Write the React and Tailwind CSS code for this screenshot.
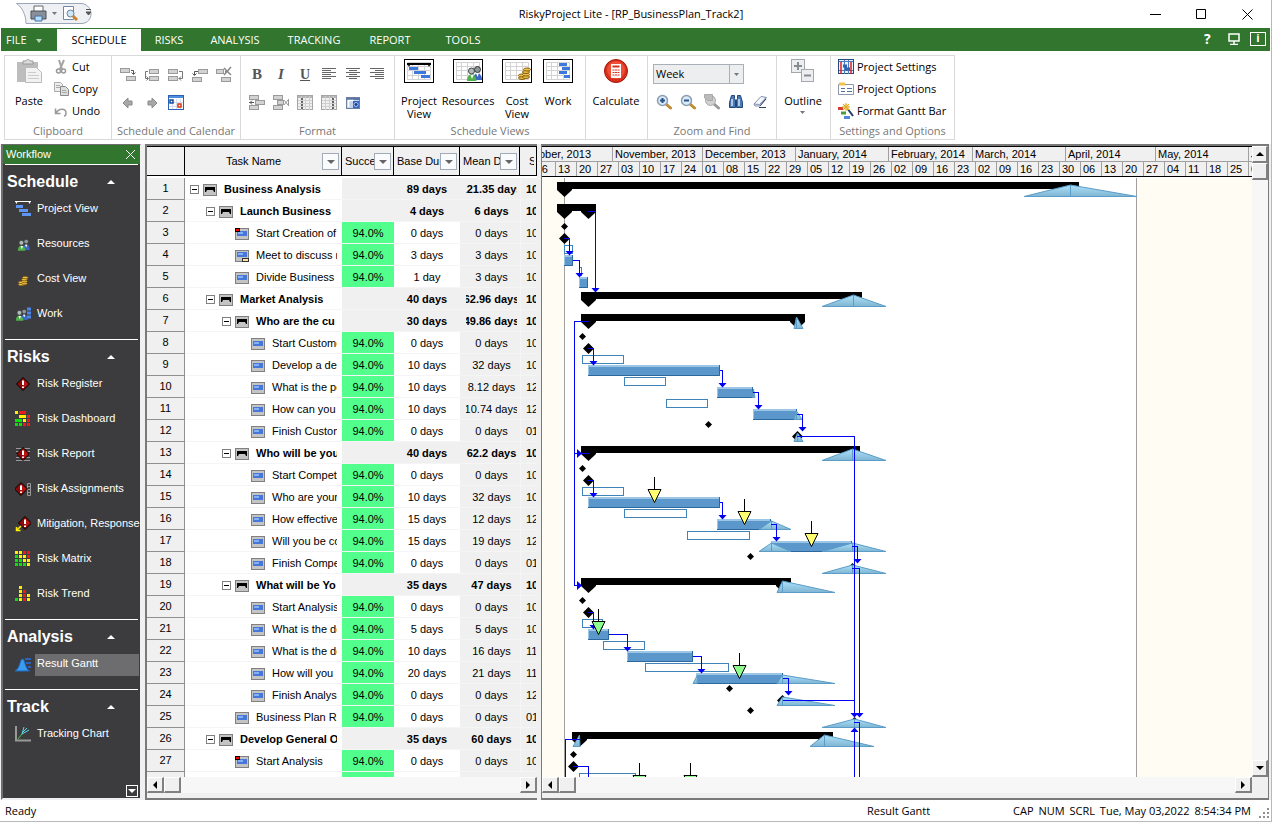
import { useState } from 'react';

const TABS = [
  { name: 'SCHEDULE', cls: 'w-[84px]' },
  { name: 'RISKS', cls: 'w-[56px]' },
  { name: 'ANALYSIS', cls: 'w-[76px]' },
  { name: 'TRACKING', cls: 'w-[82px]' },
  { name: 'REPORT', cls: 'w-[70px]' },
  { name: 'TOOLS', cls: 'w-[76px]' },
];

// level, name, base duration, mean duration, start, kind
const TASKS = [
  [0, 'Business Analysis', '89 days', '121.35 days', '10', 'sum'],
  [1, 'Launch Business', '4 days', '6 days', '10', 'sum'],
  [2, 'Start Creation of', '0 days', '0 days', '10', 'flag'],
  [2, 'Meet to discuss n', '3 days', '3 days', '10', 'note'],
  [2, 'Divide Business I', '1 day', '3 days', '10', 'task'],
  [1, 'Market Analysis', '40 days', '62.96 days', '10', 'sum'],
  [2, 'Who are the cu', '30 days', '49.86 days', '10', 'sum'],
  [3, 'Start Customer', '0 days', '0 days', '10', 'task'],
  [3, 'Develop a desc', '10 days', '32 days', '10', 'task'],
  [3, 'What is the pot', '10 days', '8.12 days', '12', 'task'],
  [3, 'How can you', '10 days', '10.74 days', '12', 'task'],
  [3, 'Finish Custome', '0 days', '0 days', '01', 'task'],
  [2, 'Who will be your', '40 days', '62.2 days', '10', 'sum'],
  [3, 'Start Competiti', '0 days', '0 days', '10', 'task'],
  [3, 'Who are your', '10 days', '32 days', '10', 'task'],
  [3, 'How effective', '15 days', '12 days', '12', 'task'],
  [3, 'Will you be co', '15 days', '19 days', '12', 'task'],
  [3, 'Finish Compet', '0 days', '0 days', '01', 'task'],
  [2, 'What will be Yo', '35 days', '47 days', '10', 'sum'],
  [3, 'Start Analysis', '0 days', '0 days', '10', 'task'],
  [3, 'What is the de', '5 days', '5 days', '10', 'task'],
  [3, 'What is the de', '10 days', '16 days', '11', 'task'],
  [3, 'How will you', '20 days', '21 days', '11', 'task'],
  [3, 'Finish Analysis', '0 days', '0 days', '12', 'task'],
  [2, 'Business Plan Re', '0 days', '0 days', '01', 'task'],
  [1, 'Develop General O', '35 days', '60 days', '10', 'sum'],
  [2, 'Start Analysis', '0 days', '0 days', '10', 'flag'],
];

const INDENT = ['pl-[5px]', 'pl-[21px]', 'pl-[37px]', 'pl-[53px]'];

const MONTHS = [
  ['November, 2013', 'w-[90px]'],
  ['December, 2013', 'w-[93px]'],
  ['January, 2014', 'w-[93px]'],
  ['February, 2014', 'w-[84px]'],
  ['March, 2014', 'w-[93px]'],
  ['April, 2014', 'w-[90px]'],
  ['May, 2014', 'w-[93px]'],
];

const WEEKS =
  '13 20 27 03 10 17 24 01 08 15 22 29 05 12 19 26 02 09 16 23 02 09 16 23 30 06 13 20 27 04 11 18 25'.split(' ');

/* ---------- chart data: first item is always the row number ---------- */

// row, start, end, tip at start, tip at end
const SUMMARIES = [
  [1, 15, 537, 1, 0],
  [2, 15, 54, 1, 1],
  [6, 39, 320, 1, 0],
  [7, 39, 263, 1, 1],
  [13, 39, 318, 1, 0],
  [19, 39, 249, 1, 1],
  [26, 30, 291, 1, 1],
];

const SUMMARY_TRIS = [
  [1, 482, 528, 595],
  [6, 280, 311, 344],
  [7, 252, 254, 261],
  [13, 280, 310, 344],
  [19, 235, 240, 293],
  [26, 31, 37, 38],
  [26, 268, 282, 332],
];

const BASELINES = [
  [4, 22, 30],
  [5, 37, 39],
  [9, 40, 81],
  [10, 82, 123],
  [11, 124, 165],
  [15, 40, 81],
  [16, 82, 144],
  [17, 145, 207],
  [21, 40, 60],
  [22, 61, 102],
  [23, 103, 186],
  [28, 37, 93],
];

const BARS = [
  [4, 22, 31],
  [5, 37, 46],
  [9, 46, 178],
  [10, 175, 211],
  [11, 211, 255],
  [15, 46, 178],
  [16, 175, 229],
  [17, 229, 310],
  [21, 46, 67],
  [22, 85, 151],
  [23, 154, 241],
];

const TASK_TRIS = [
  [10, 210, 211, 213],
  [11, 252, 254, 260],
  [12, 252, 255, 261],
  [16, 217, 229, 249],
  [17, 217, 229, 249],
  [17, 280, 310, 344],
  [18, 280, 310, 344],
  [23, 151, 155, 155],
  [23, 235, 240, 293],
  [24, 235, 240, 293],
  [25, 280, 312, 344],
];

const SMALL_DIAMONDS = [
  [3, 22], [8, 40], [12, 166], [14, 40], [18, 208], [20, 40], [24, 187], [25, 208], [27, 31],
];

const BIG_DIAMONDS = [
  [3, 22], [8, 46], [12, 255], [14, 46], [18, 310], [20, 46], [24, 240], [25, 312], [27, 31],
];

// row, x, colour
const RISKS = [
  [15, 112, '#ffff70'],
  [16, 202, '#ffff70'],
  [17, 269, '#ffff70'],
  [21, 56, '#8cff8c'],
  [23, 197, '#8cff8c'],
  [28, 97, '#8cff8c'],
  [28, 148, '#8cff8c'],
];

const LINKS = [
  'M46 33.5H53.5V112',
  'M22 60.5H27.5V75',
  'M31 82.5H37.5V97',
  'M47 143.5H32.5V407.5H38',
  'M32.5 275.5H47',
  'M46 170.5H51.5V185',
  'M178 192.5H180.5V207',
  'M211 214.5H216.5V229',
  'M255 236.5H260.5V251',
  'M255 258.5H312.5V537',
  'M46 302.5H51.5V317',
  'M178 324.5H180.5V339',
  'M229 346.5H234.5V361',
  'M310 368.5H315.5V383',
  'M310 390.5H317.5V537',
  'M46 434.5H51.5V449',
  'M67 456.5H85.5V471',
  'M151 478.5H159.5V493',
  'M241 500.5H246.5V515',
  'M241 522.5H312.5',
  'M312 544.5H317.5V1200',
  'M312.5 552V1200',
  'M38 561.5H23.5V1200',
  'M31 588.5H46.5V1200',
];

const DOWN_ARROWS = [
  [53, 114], [27, 77], [37, 99], [51, 187], [180, 209], [216, 231], [260, 253], [312, 539],
  [51, 319], [180, 341], [234, 363], [315, 385], [317, 539], [51, 451], [85, 473], [159, 495],
  [246, 517],
];

const top = (row) => (row - 1) * 22;

function Tri({ x1, x2, x3, y, h }) {
  return (
    <g stroke="#5b9cc8">
      <path d={`M${x1} ${y + h}L${x2 + 0.5} ${y}L${x3} ${y + h}Z`} fill="url(#tri)" />
      <path d={`M${x2 + 0.5} ${y}V${y + h}`} />
    </g>
  );
}

function GanttChart() {
  return (
    <svg className="absolute inset-0 h-full w-full" role="img" aria-label="Result Gantt chart">
      <defs>
        <linearGradient id="tri" x1="0" y1="0" x2="0" y2="1">
          <stop offset="0" stopColor="#aee2fb" />
          <stop offset="1" stopColor="#7fb5d2" />
        </linearGradient>
      </defs>
      <rect width="100%" height="100%" fill="#fffcf4" />
      <rect x="22" width="572" height="100%" fill="#fff" />
      <path d="M22.5 0V1200M594.5 0V1200" stroke="#a0a0a0" />

      {SUMMARIES.map(([row, s, e, a, b]) => (
        <g key={row} fill="#000">
          <rect x={s} y={top(row) + 4} width={e - s} height="7" />
          {a ? <path d={`M${s} ${top(row) + 11}h15v1l-7.500 7l-7.500 -7z`} /> : null}
          {b ? <path d={`M${e} ${top(row) + 11}h-15v1l7.500 7l7.500 -7z`} /> : null}
        </g>
      ))}
      {SUMMARY_TRIS.map(([row, x1, x2, x3]) => (
        <Tri key={`${row}-${x1}`} x1={x1} x2={x2} x3={x3} y={top(row) + 7} h={11.5} />
      ))}
      {SMALL_DIAMONDS.map(([row, x]) => (
        <path key={row} d={`M${x + 0.5} ${top(row) + 1}l3.500 3.500l-3.500 3.500l-3.500 -3.500z`} />
      ))}
      {BIG_DIAMONDS.map(([row, x]) => (
        <path key={row} d={`M${x + 0.5} ${top(row) + 11}l5.500 5.500l-5.500 5.500l-5.500 -5.500z`} />
      ))}
      {BASELINES.map(([row, s, e]) => (
        <rect key={row} x={s + 0.5} y={top(row) + 1.5} width={e - s} height="8" fill="#fff" stroke="#3f83b8" />
      ))}
      {BARS.map(([row, s, e]) => (
        <g key={row}>
          <rect x={s} y={top(row) + 11} width={e - s} height="11" fill="#5b97cb" />
          <path d={`M${s} ${top(row) + 12}H${e}`} stroke="#9cc6e6" strokeWidth="2" />
          <path d={`M${s + 0.5} ${top(row) + 11}v11`} stroke="#9cc6e6" />
          <path d={`M${s} ${top(row) + 21.5}H${e - 0.5}V${top(row) + 11}`} stroke="#2b689f" fill="none" />
        </g>
      ))}
      {TASK_TRIS.map(([row, x1, x2, x3]) => (
        <Tri key={`${row}-${x1}`} x1={x1} x2={x2} x3={x3} y={top(row) + 13} h={8.5} />
      ))}

      <g fill="none" stroke="#0000f5" shapeRendering="crispEdges">
        {LINKS.map((d) => (
          <path key={d} d={d} />
        ))}
      </g>
      <g fill="#0000f5">
        {DOWN_ARROWS.map(([x, y]) => (
          <path key={`${x}-${y}`} d={`M${x - 3.5} ${y - 4}h8l-4 4.500z`} />
        ))}
        <path d="M35 271v9l5 -4.500zM35 403v9l5 -4.500zM308.500 554h8l-4 -4.500z" />
      </g>

      {RISKS.map(([row, x, fill]) => (
        <g key={`${row}-${x}`} stroke="#000">
          <path d={`M${x + 0.5} ${top(row) - 9}v12`} />
          <path d={`M${x - 6} ${top(row) + 3.5}h13l-6.500 13z`} fill={fill} />
        </g>
      ))}
    </svg>
  );
}

/* ---------- icons ---------- */

function Svg({ w = 16, h = 16, children }) {
  return (
    <svg width={w} height={h} viewBox={`0 0 ${w} ${h}`} fill="none" className="shrink-0" aria-hidden="true">
      {children}
    </svg>
  );
}

const Block = ({ x, y, w = 9 }) => (
  <rect x={x + 0.5} y={y + 0.5} width={w} height="4" fill="#d2d2d2" stroke="#9a9a9a" />
);

const ScheduleIcons = {
  'Insert task below': (
    <Svg><Block x={0} y={2} /><Block x={6} y={10} /><path d="M11 4.500h2.500V8M11.500 6.500l2 2l2 -2" stroke="#555" /></Svg>
  ),
  Indent: (
    <Svg><Block x={5} y={3} /><Block x={5} y={10} /><path d="M4 5.500H1.500V12.500H4M2.500 10.500l2 2l-2 2" stroke="#777" /></Svg>
  ),
  'Link tasks': (
    <Svg><Block x={0} y={3} /><Block x={0} y={10} /><path d="M11 5.500h3.500V12.500H11M13 10.500l-2 2l2 2" stroke="#777" /></Svg>
  ),
  Outdent: (
    <Svg><Block x={6} y={3} /><Block x={0} y={11} /><path d="M6 5.500H2.500V9M0.500 7.500l2 2l2 -2" stroke="#555" /></Svg>
  ),
  'Delete task': (
    <Svg><Block x={0} y={3} w={7} /><Block x={5} y={11} /><path d="M9 5.500h3M8 2l7 7M15 1L8 9" stroke="#888" strokeWidth="1.500" /></Svg>
  ),
};

const ArrowIcon = ({ flip }) => (
  <Svg>
    <path
      d={flip ? 'M13 8L8 3V6H4V10H8V13z' : 'M3 8L8 3V6H12V10H8V13z'}
      fill="#a8a8a8"
      stroke="#8a8a8a"
    />
  </Svg>
);

const CalendarIcon = () => (
  <Svg>
    <rect x="0.500" y="0.500" width="15" height="14" fill="#fff" stroke="#2a62b4" />
    <path d="M1 1h14v2H1z" fill="#4f8ede" />
    <path d="M4.500 4v10M8.500 4v10M12.500 4v10M1 7.500h14M1 11.500h14" stroke="#d5deee" />
    <rect x="2" y="5" width="3" height="3" fill="#fff" stroke="#174a9c" strokeWidth="1.500" />
    <rect x="10" y="9" width="3" height="3" fill="#fff" stroke="#d83a12" strokeWidth="1.500" />
  </Svg>
);

const AlignIcon = ({ d }) => (
  <Svg><path d={d} stroke="#666" /></Svg>
);

const ColumnIcon = ({ x }) => (
  <Svg>
    <rect x="0.500" y="0.500" width="15" height="14" fill="#f0f0f0" stroke="#a5a5a5" />
    <path d="M1 2h14" stroke="#b5b5b5" strokeWidth="2" />
    <path d="M1 5.500h14M1 8.500h14M1 11.500h14M4.500 1v14M8.500 1v14M12.500 1v14" stroke="#cfcfcf" />
    <path d={`M${x} 3v12`} stroke="#666" strokeWidth="2" strokeDasharray="2 1" />
  </Svg>
);

const ViewFrame = ({ children, grid = true }) => (
  <Svg w={30} h={24}>
    <rect x="0.500" y="0.500" width="29" height="23" fill="#fff" stroke="#000" />
    {grid && <path d="M3.500 3.500h23v17h-23zM3 7.500h24M3 11.500h24M3 16.500h24M8.500 3v17M14.500 3v17M20.500 3v17" stroke="#d3d3d3" />}
    {children}
  </Svg>
);

const People = () => (
  <>
    <path d="M7 15c0-9 9-9 9 0z" fill="#3b66c4" />
    <path d="M10 8l1.500 4L13 8z" fill="#fff" />
    <circle cx="11.500" cy="4.500" r="3" fill="#8b9696" stroke="#333" />
    <path d="M1 16c0-9 9-9 9.500 0z" fill="#4fb04a" />
    <path d="M4.500 10l1.500 4l1.500-4z" fill="#fff" />
    <circle cx="5.500" cy="6" r="3" fill="#b0baba" stroke="#444" />
  </>
);

const Coins = () => (
  <g fill="#f0c24a" stroke="#86600e">
    <ellipse cx="4" cy="13" rx="3.500" ry="1.500" />
    <ellipse cx="4" cy="10.500" rx="3.500" ry="1.500" />
    <ellipse cx="8" cy="12" rx="3.500" ry="1.500" />
    <ellipse cx="8" cy="9.500" rx="3.500" ry="1.500" />
    <ellipse cx="8" cy="7" rx="3.500" ry="1.500" />
    <ellipse cx="9" cy="4.500" rx="3.500" ry="1.500" />
  </g>
);

const Lens = ({ sign, gray }) => (
  <Svg>
    <path d="M10 10l4.500 4" stroke={gray ? '#999' : '#c08a30'} strokeWidth="3" strokeLinecap="round" />
    {gray ? (
      <>
        <circle cx="6.500" cy="6.500" r="5" fill="#d0d0d0" stroke="#aaa" />
        <path d="M0.500 0.500h8v6H4L0.500 4z" fill="#bbb" stroke="#aaa" />
      </>
    ) : (
      <circle cx="6.500" cy="6.500" r="5" fill="#dbeaf7" stroke="#8d9db1" strokeWidth="1.500" />
    )}
    {sign && <path d={sign} stroke="#27548f" strokeWidth="2" />}
  </Svg>
);

const RiskGem = () => (
  <>
    <path d="M8 1.500l6.500 6.500L8 14.500L1.500 8z" fill="#8e0808" stroke="#000" />
    <path d="M8 3l5 5l-5 5z" fill="#b81414" />
    <path d="M8 4.500v4.500M8 10.500v1.500" stroke="#fff" strokeWidth="2" />
  </>
);

const Squares = ({ cells }) => (
  <Svg>
    {cells.map(([c, r, fill, w = 1]) => (
      <rect key={`${c}${r}`} x={c * 4} y={r * 4} width={w * 4 - 1} height="3" fill={fill} />
    ))}
  </Svg>
);

const G = '#0be00b';
const Y = '#ffee00';
const R = '#f01818';

const TaskBars = () => (
  <Svg>
    <path d="M0 0.500h16" stroke="#fff" />
    <path d="M0 0h3L1.500 3zM13 0h3l-1.500 3z" fill="#fff" />
    <rect x="1" y="4" width="7" height="3" fill="#5e94f2" />
    <rect x="4" y="8" width="9" height="3" fill="#5e94f2" />
    <rect x="7" y="12" width="9" height="3" fill="#5e94f2" />
  </Svg>
);

const SECTIONS = [
  {
    title: 'Schedule',
    items: [
      ['Project View', <TaskBars />],
      ['Resources', <Svg><g transform="translate(2 2) scale(.8)"><People /></g></Svg>],
      ['Cost View', <Svg><g transform="translate(3 3) scale(.8)"><Coins /></g></Svg>],
      ['Work', (
        <Svg>
          <g transform="translate(0 2) scale(.8)"><People /></g>
          <path d="M12 3h4M12 7h4M12 11h4" stroke="#4a86ee" strokeWidth="3" />
        </Svg>
      )],
    ],
  },
  {
    title: 'Risks',
    items: [
      ['Risk Register', <Svg><RiskGem /></Svg>],
      ['Risk Dashboard', (
        <Squares cells={[[0, 0, Y], [1, 0, R, 2], [1, 1, Y, 2], [3, 1, R], [0, 2, G, 2], [2, 2, Y], [3, 2, R], [0, 3, G], [1, 3, G], [2, 3, R], [3, 3, R]]} />
      )],
      ['Risk Report', <Svg><path d="M1 2.500h14M1 5.500h14M1 8.500h14M1 11.500h14M1 14.500h14" stroke="#999" /><RiskGem /></Svg>],
      ['Risk Assignments', <Svg><path d="M12.500 2.500h3v12h-3zM12 5.500h4M12 8.500h4M12 11.500h4" stroke="#999" /><g transform="translate(-2 0)"><RiskGem /></g></Svg>],
      ['Mitigation, Response', <Svg><g transform="translate(2 -1)"><RiskGem /></g><path d="M6 10L1.500 14.500M1.500 11v3.500h4" stroke="#ffee00" strokeWidth="1.500" /></Svg>],
      ['Risk Matrix', (
        <Squares cells={[[0, 0, Y], [1, 0, Y], [2, 0, R], [3, 0, R], [0, 1, G], [1, 1, Y], [2, 1, Y], [3, 1, R], [0, 2, G], [1, 2, G], [2, 2, Y], [3, 2, Y], [0, 3, G], [1, 3, G], [2, 3, G], [3, 3, Y]]} />
      )],
      ['Risk Trend', (
        <Squares cells={[[1, 0, Y], [1, 1, Y], [2, 1, R], [1, 2, Y], [2, 2, R], [3, 2, Y], [0, 3, G], [1, 3, Y], [2, 3, R], [3, 3, Y]]} />
      )],
    ],
  },
  {
    title: 'Analysis',
    items: [
      ['Result Gantt', (
        <Svg>
          <path d="M0 15C5 13 5 3 7.500 3s2.500 10 7 12z" fill="#3b9bf0" stroke="#1d6bc0" />
          <path d="M10 3h6M11 7h5M13 11h3" stroke="#2f62b8" strokeWidth="2" />
        </Svg>
      )],
    ],
  },
  {
    title: 'Track',
    items: [
      ['Tracking Chart', <Svg><path d="M1 0v14.500h15" stroke="#999" strokeWidth="2" /><path d="M3 13l4-5" stroke="#3fd03f" /><path d="M7 8l2-7M7 8l7-4M8 6l4-4" stroke="#5fd8e8" /></Svg>],
    ],
  },
];

const TaskMark = ({ y = 3 }) => (
  <>
    <rect x="2" y={y} width="10" height="5" fill="#4678dc" />
    <rect x="3" y={y + 1} width="5" height="2" fill="#86b0f4" />
  </>
);

const ROW_ICON = {
  sum: <path d="M2 3h10v5h-1l-1-2H4L3 8H2z" fill="#000" />,
  task: <TaskMark />,
  flag: (
    <>
      <TaskMark />
      <rect x="0.500" y="0.500" width="4" height="3" fill="#f00" stroke="#000" />
    </>
  ),
  note: (
    <>
      <TaskMark y={2} />
      <rect x="7.500" y="8.500" width="6" height="3" fill="#ffe2a8" stroke="#333" />
    </>
  ),
};

/* ---------- ribbon ---------- */

function Group({ label, className, children }) {
  return (
    <section className={`flex shrink-0 flex-col border-r border-[#d9d9d9] ${className}`} aria-label={label}>
      <div className="min-h-0 flex-1">{children}</div>
      <div className="h-[17px] text-center leading-[17px] text-[#777]">{label}</div>
    </section>
  );
}

function IconButton({ label, children }) {
  return (
    <button type="button" aria-label={label} className="flex h-[22px] w-6 items-center justify-center">
      {children}
    </button>
  );
}

function BigButton({ lines, className = '', children }) {
  return (
    <button type="button" className={`flex flex-col items-center pt-[3px] ${className}`}>
      <span className="mb-[11px] flex h-6 items-center">{children}</span>
      {lines.map((t) => (
        <span key={t} className="h-[13px] leading-[13px]">{t}</span>
      ))}
    </button>
  );
}

function LineButton({ icon, text }) {
  return (
    <button type="button" className="flex h-[22px] items-center gap-[3px]">
      <span className="flex w-4 justify-center">{icon}</span>
      {text}
    </button>
  );
}

function Ribbon() {
  const [zoom, setZoom] = useState('Week');

  return (
    <div className="flex h-[93px] shrink-0 items-start overflow-hidden bg-white pt-1 pl-1 text-[11px]">
      <div className="flex h-[85px] border border-r-0 border-[#d9d9d9]">
        <Group label="Clipboard" className="w-[107px]">
          <div className="flex">
            <BigButton lines={['Paste']} className="w-[48px]">
              <Svg w={26} h={24}>
                <path d="M1 3h21v20H1z" fill="#bdbdbd" />
                <path d="M7 5V2h3c0-2 4-2 4 0h3v3z" fill="#ddd" stroke="#999" />
                <path d="M9.500 8.500h11l5 5v10h-16z" fill="#f2f2f2" stroke="#bbb" />
                <path d="M12 13.500h8M12 16.500h11M12 19.500h11" stroke="#ccc" />
              </Svg>
            </BigButton>
            <div>
              <LineButton text="Cut" icon={<Svg><path d="M6 1l3 9M11 1l-4 9" stroke="#a5a5a5" strokeWidth="2" /><circle cx="5.500" cy="12" r="2" stroke="#999" strokeWidth="1.500" /><circle cx="10.500" cy="12" r="2" stroke="#999" strokeWidth="1.500" /></Svg>} />
              <LineButton text="Copy" icon={<Svg><path d="M1.500 1.500h6l2 2v7h-8z" fill="#eee" stroke="#aaa" /><path d="M7.500 5.500h5l3 3v6h-8z" fill="#ddd" stroke="#888" /><path d="M9 9.500h4M9 11.500h5M3 4.500h4M3 6.500h4" stroke="#aaa" /></Svg>} />
              <LineButton text="Undo" icon={<Svg><path d="M2.500 5.500v5h5M3 10c3-5 10-5 10 0c0 2-1 3-2 3" stroke="#999" strokeWidth="1.500" /></Svg>} />
            </div>
          </div>
        </Group>

        <Group label="Schedule and Calendar" className="w-[129px]">
          <div className="flex flex-col gap-[7px] pt-[7px] pl-1">
            <div className="flex">
              {Object.entries(ScheduleIcons).map(([label, icon]) => (
                <IconButton key={label} label={label}>{icon}</IconButton>
              ))}
            </div>
            <div className="flex">
              <IconButton label="Back"><ArrowIcon /></IconButton>
              <IconButton label="Forward"><ArrowIcon flip /></IconButton>
              <IconButton label="Calendar"><CalendarIcon /></IconButton>
            </div>
          </div>
        </Group>

        <Group label="Format" className="w-[154px]">
          <div className="flex flex-col gap-[7px] pt-[7px] pl-1 text-[#555]">
            <div className="flex">
              <IconButton label="Bold"><b className="font-['Liberation_Serif',serif] text-[15px]">B</b></IconButton>
              <IconButton label="Italic"><b className="font-['Liberation_Serif',serif] text-[15px] italic">I</b></IconButton>
              <IconButton label="Underline"><b className="font-['Liberation_Serif',serif] text-[14px] underline">U</b></IconButton>
              <IconButton label="Align left"><AlignIcon d="M1 2.500h14M1 4.500h9M1 6.500h14M1 8.500h9M1 10.500h14M1 12.500h9" /></IconButton>
              <IconButton label="Align center"><AlignIcon d="M1 2.500h14M4 4.500h8M1 6.500h14M4 8.500h8M1 10.500h14M4 12.500h8" /></IconButton>
              <IconButton label="Align right"><AlignIcon d="M1 2.500h14M6 4.500h9M1 6.500h14M6 8.500h9M1 10.500h14M6 12.500h9" /></IconButton>
            </div>
            <div className="flex">
              <IconButton label="Insert row"><Svg><Block x={0} y={0} /><Block x={6} y={5} /><Block x={0} y={10} /><path d="M0 7.500h5M3 5.500l-2 2l2 2" stroke="#555" /></Svg></IconButton>
              <IconButton label="Delete row"><Svg><Block x={0} y={0} /><Block x={4} y={5} w={6} /><Block x={0} y={10} /><path d="M11 5l4 5M15 5l-4 5M15.500 4v7" stroke="#999" /></Svg></IconButton>
              <IconButton label="Insert column"><ColumnIcon x={5} /></IconButton>
              <IconButton label="Delete column"><ColumnIcon x={12} /></IconButton>
              <IconButton label="Snapshot">
                <Svg>
                  <rect x="1.500" y="2.500" width="13" height="11" fill="#c3d4ee" stroke="#6d7f9f" />
                  <path d="M2 3h13v2H2z" fill="#5a76a8" />
                  <path d="M3.500 12V5.500h5" stroke="#fff" strokeWidth="1.500" />
                  <rect x="8" y="6" width="6" height="7" fill="#3364c0" />
                  <circle cx="11" cy="9.500" r="2" fill="#1c3f8c" stroke="#a9c2ea" />
                </Svg>
              </IconButton>
            </div>
          </div>
        </Group>

        <Group label="Schedule Views" className="w-[191px]">
          <div className="flex">
            <BigButton lines={['Project', 'View']} className="w-[48px]">
              <ViewFrame>
                <path d="M3 5h24" stroke="#000" strokeWidth="2" />
                <path d="M3 4h4L5 8zM23 4h4l-2 4z" fill="#000" />
                <path d="M5 9.500h9M10 13.500h12M17 17.500h9" stroke="#3d78de" strokeWidth="3" />
              </ViewFrame>
            </BigButton>
            <BigButton lines={['Resources']} className="w-[50px]">
              <ViewFrame><g transform="translate(13 6)"><People /></g></ViewFrame>
            </BigButton>
            <BigButton lines={['Cost', 'View']} className="w-[48px]">
              <ViewFrame><g transform="translate(16 6)"><Coins /></g></ViewFrame>
            </BigButton>
            <BigButton lines={['Work']} className="w-[34px]">
              <ViewFrame><path d="M16 5.500h8M19 9.500h8M16 13.500h8M21 17.500h6" stroke="#3d78de" strokeWidth="3" /></ViewFrame>
            </BigButton>
          </div>
        </Group>

        <Group label="" className="w-[62px]">
          <BigButton lines={['Calculate']} className="w-[60px]">
            <Svg w={24} h={24}>
              <circle cx="12" cy="12" r="11.500" fill="#d9301c" stroke="#a3170a" />
              <circle cx="12" cy="11" r="9" fill="#ee4f35" />
              <rect x="7" y="5" width="10" height="14" fill="#fff" />
              <path d="M8.500 7.500h7" stroke="#d9301c" strokeWidth="2" />
              <path d="M8.500 11h7M8.500 13.500h7M8.500 16h7" stroke="#d9301c" strokeDasharray="2 0.500" />
            </Svg>
          </BigButton>
        </Group>

        <Group label="Zoom and Find" className="w-[129px]">
          <div className="pt-2 pl-[5px]">
            <div className="relative w-[91px]">
              <select
                aria-label="Time scale"
                value={zoom}
                onChange={(e) => setZoom(e.target.value)}
                className="h-5 w-full appearance-none border border-[#a9b0b8] bg-[#eceef0] pl-[2px] leading-[18px]"
              >
                <option>Day</option>
                <option>Week</option>
                <option>Month</option>
              </select>
              <span className="pointer-events-none absolute inset-y-0 right-0 flex w-[15px] items-center justify-center border border-[#a9b0b8]">
                <Svg w={5} h={3}><path d="M0 0h5L2.500 3z" fill="#777" /></Svg>
              </span>
            </div>
          </div>
          <div className="flex pt-[7px] pl-1">
            <IconButton label="Zoom in"><Lens sign="M4 6.500h5M6.500 4v5" /></IconButton>
            <IconButton label="Zoom out"><Lens sign="M4 6.500h5" /></IconButton>
            <IconButton label="Zoom to fit"><Lens gray /></IconButton>
            <IconButton label="Find">
              <Svg>
                <path d="M3.500 1.500h3v3l1 2v7h-6v-5zM9.500 1.500h3l2 7v5h-6v-7l1-2z" fill="#4b7ab5" stroke="#20477c" />
                <path d="M7 6h2v3H7z" fill="#20477c" />
                <path d="M4 5v7M11 5v7" stroke="#d5e4f6" strokeWidth="1.500" />
              </Svg>
            </IconButton>
            <IconButton label="Erase">
              <Svg>
                <path d="M2 10l7-7.500l5.500 1L8 12H3z" fill="#f6f8fc" stroke="#7f8fb0" />
                <path d="M2 10l5.500 0.500L14 3.500" stroke="#7f8fb0" />
                <path d="M7 13.500h7M8 12l6-7" stroke="#33415c" />
              </Svg>
            </IconButton>
          </div>
        </Group>

        <Group label="" className="w-[54px]">
          <BigButton lines={['Outline']} className="w-[52px]">
            <Svg w={24} h={24}>
              <rect x="0.500" y="0.500" width="13" height="13" fill="#eceef0" stroke="#a4a8ad" />
              <path d="M7 3v8M3 7h8" stroke="#888c92" strokeWidth="2" />
              <rect x="10.500" y="10.500" width="12" height="12" fill="#eceef0" stroke="#a4a8ad" />
              <path d="M13 16.500h7" stroke="#888c92" strokeWidth="2" />
            </Svg>
          </BigButton>
          <div className="flex w-[50px] justify-center pt-1"><Svg w={5} h={3}><path d="M0 0h5L2.500 3z" fill="#777" /></Svg></div>
        </Group>

        <Group label="Settings and Options" className="w-[124px]">
          <div className="pl-[7px]">
            <LineButton text="Project Settings" icon={<Svg><rect x="0.500" y="0.500" width="15" height="14" fill="#e8f0fa" stroke="#244a80" /><path d="M1 2.500h14M1 11.500h14M6.500 1v14M10.500 1v14" stroke="#4b7cc0" /><path d="M3 3v12M13 3v12" stroke="#e02020" strokeWidth="1.500" /><path d="M5 7h4M7 10h5" stroke="#2e62b4" strokeWidth="3" /></Svg>} />
            <LineButton text="Project Options" icon={<Svg><path d="M0.500 3.500h15v10h-15z" fill="#fff" stroke="#8a97a8" /><path d="M1 1.500h6v3H1z" fill="#f5c34c" /><path d="M3 7.500h4M9 7.500h5M3 10.500h4M9 10.500h5" stroke="#56729c" /></Svg>} />
            <LineButton text="Format Gantt Bar" icon={<Svg><path d="M0 5.500h5" stroke="#d8402c" strokeWidth="3" /><path d="M3 10h5" stroke="#4c9a3a" strokeWidth="3" /><path d="M6 14.500h6" stroke="#4f86e0" strokeWidth="3" /><path d="M9 5l6 8" stroke="#223a66" strokeWidth="2" /><circle cx="8" cy="4" r="3" fill="#ffe28a" /><path d="M8 0v8M4 4h8M5 1l6 6M11 1L5 7" stroke="#e0a828" /></Svg>} />
          </div>
        </Group>
      </div>
    </div>
  );
}

/* ---------- side panel ---------- */

function Workflow() {
  const [active, setActive] = useState('Result Gantt');

  return (
    <aside className="flex w-[140px] shrink-0 flex-col overflow-hidden border-t border-r border-b-2 border-l-2 border-t-[#6e6e6e] border-r-[#f0f0f0] border-b-[#f0f0f0] border-l-[#6e6e6e] bg-[#3c3c3e] text-white">
      <div className="flex h-[19px] shrink-0 items-center justify-between bg-[#31752f] pr-1 pl-[3px]">
        <span>Workflow</span>
        <button type="button" aria-label="Close">
          <Svg w={11} h={11}><path d="M1 1l9 9M10 1l-9 9" stroke="#fff" /></Svg>
        </button>
      </div>
      {SECTIONS.map((s) => (
        <section key={s.title} className="ml-[2px] shrink-0">
          <button
            type="button"
            className="flex h-[35px] w-[133px] items-center justify-between border-t border-white pr-[23px] pl-[2px] text-[16px] font-bold"
          >
            {s.title}
            <Svg w={8} h={4}><path d="M4 0l4 4H0z" fill="#fff" /></Svg>
          </button>
          {s.items.map(([name, icon]) => (
            <a
              key={name}
              href="#"
              onClick={() => setActive(name)}
              className="mr-px flex h-[35px] items-start gap-[4px] pl-[10px] whitespace-nowrap"
            >
              <span className="pt-[2px]">{icon}</span>
              <span className={`h-[22px] flex-1 pl-[2px] leading-[18px] ${name === active ? 'bg-[#6d6d6f]' : ''}`}>{name}</span>
            </a>
          ))}
        </section>
      ))}
      <div className="mt-auto flex justify-end px-[2px] pb-px">
        <button type="button" aria-label="More" className="flex h-3 w-3 items-center justify-center border border-white">
          <Svg w={8} h={4}><path d="M0 0h8L4 4z" fill="#fff" /></Svg>
        </button>
      </div>
    </aside>
  );
}

/* ---------- scroll bars ---------- */

const ARROWS = {
  left: 'M6 0v8L2 4z',
  right: 'M2 0v8l4-4z',
  up: 'M0 6h8L4 2z',
  down: 'M0 2h8L4 6z',
};

function ScrollButton({ dir, className = 'w-[17px] h-4' }) {
  return (
    <button
      type="button"
      aria-label={dir ? `Scroll ${dir}` : 'Scroll thumb'}
      className={`flex shrink-0 items-center justify-center border border-r-2 border-b-2 border-t-white border-r-[#808080] border-b-[#808080] border-l-white bg-[#f0f0f0] ${className}`}
    >
      {dir && <Svg w={8} h={8}><path d={ARROWS[dir]} fill="#000" /></Svg>}
    </button>
  );
}

function HScroll() {
  return (
    <div className="flex h-4 flex-1 bg-[#f7f7f7]">
      <ScrollButton dir="left" />
      <ScrollButton />
      <div className="flex-1" />
      <ScrollButton dir="right" />
    </div>
  );
}

/* ---------- task table ---------- */

function HeadCell({ className, children, filter = true, center }) {
  return (
    <th scope="col" className={`h-8 bg-white p-0 align-top font-normal ${className}`}>
      <div className="flex h-[30px] items-center overflow-hidden border-y border-r border-black bg-[#f0f0f0] pt-px pr-[2px] whitespace-nowrap">
        <span className={`flex-1 overflow-hidden ${center ? 'text-center' : 'pl-[3px] text-left'}`}>{children}</span>
        {filter && (
          <button type="button" aria-label={`Filter ${children}`} className="flex h-[17px] w-[17px] shrink-0 items-center justify-center border border-[#a3abb8] bg-[#fafbfc]">
            <Svg w={8} h={4}><path d="M0 0h8L4 4z" fill="#666" /></Svg>
          </button>
        )}
      </div>
    </th>
  );
}

function TaskRow({ index, task }) {
  const [level, name, base, mean, start, kind] = task;
  const sum = kind === 'sum';
  const line = 'h-[22px] border-b border-[#f5f5f5] p-0 pt-[2px]';

  return (
    <tr className={sum ? 'font-bold' : ''}>
      <th scope="row" className="h-[22px] border-r border-b border-[#909090] bg-[#f0f0f0] p-0 text-center font-normal">{index}</th>
      <td className={line}>
        <div className={`mr-[5px] flex items-center overflow-hidden whitespace-nowrap ${INDENT[level]}`}>
          <span className="flex w-[13px] shrink-0">
            {sum && <Svg w={9} h={9}><rect x="0.500" y="0.500" width="8" height="8" fill="#fff" stroke="#808080" /><path d="M2 4.500h5" stroke="#000" /></Svg>}
          </span>
          <Svg w={14} h={12}>
            <rect x="0.500" y="0.500" width="13" height="11" fill="#c4c4c4" stroke="#808080" />
            {ROW_ICON[kind]}
          </Svg>
          <span className="pl-[7px]">{name}</span>
        </div>
      </td>
      <td className={`${line} text-center ${sum ? 'bg-[#f0f0f0]' : 'bg-[#52ff8c]'}`}>{sum ? '' : '94.0%'}</td>
      <td className={`${line} text-center ${sum ? 'bg-[#f0f0f0]' : ''}`}>{base}</td>
      <td className={`${line} bg-[#f0f0f0]`}>
        <div className="mr-[3px] ml-[6px] flex justify-center overflow-hidden whitespace-nowrap">
          <span className="shrink-0">{mean}</span>
        </div>
      </td>
      <td className={`${line} border-l bg-[#f0f0f0]`}>
        <div className="mr-px overflow-hidden pl-[5px]">{start}</div>
      </td>
    </tr>
  );
}

function TaskTable() {
  return (
    <div className="ml-1 flex w-[392px] shrink-0 flex-col border-y-2 border-l-2 border-[#7a7a7a] bg-[#f0f0f0]">
      <div className="min-h-0 flex-1 overflow-hidden bg-white">
        <table className="w-full table-fixed border-separate border-spacing-0">
          <thead>
            <tr>
              <HeadCell className="w-[38px]" filter={false} />
              <HeadCell className="w-[157px]" center>Task Name</HeadCell>
              <HeadCell className="w-[52px]">Success</HeadCell>
              <HeadCell className="w-[66px]">Base Duration</HeadCell>
              <HeadCell className="w-[60px]">Mean Duration</HeadCell>
              <HeadCell filter={false}><span className="pl-[6px]">Start</span></HeadCell>
            </tr>
          </thead>
          <tbody>
            {TASKS.map((t, i) => (
              <TaskRow key={i} index={i + 1} task={t} />
            ))}
            <tr>
              <td className="h-[22px] border-r border-[#909090] bg-[#f0f0f0]" />
              <td />
              <td className="bg-[#52ff8c]" />
              <td />
              <td className="bg-[#f0f0f0]" />
              <td className="bg-[#f0f0f0]" />
            </tr>
          </tbody>
        </table>
      </div>
      <div className="mb-[5px] flex"><HScroll /></div>
    </div>
  );
}

function GanttPanel() {
  return (
    <div className="mr-[2px] ml-1 flex min-w-0 flex-1 flex-col border-x border-y-2 border-[#7a7a7a] bg-[#f0f0f0]">
      <div className="flex min-h-0 flex-1">
        <div className="flex min-w-0 flex-1 flex-col overflow-hidden bg-white">
          <div className="mb-px shrink-0 border-y border-black bg-[#f0f0f0] whitespace-nowrap">
            <div className="flex h-[15px] border-b border-[#a0a0a0] leading-[14px]">
              <div className="flex w-[70px] shrink-0 justify-end overflow-hidden pr-[21px]">October, 2013</div>
              {MONTHS.map(([m, w]) => (
                <div key={m} className={`shrink-0 overflow-hidden border-l border-[#a0a0a0] pl-[2px] ${w}`}>{m}</div>
              ))}
              <div className="min-w-0 flex-1 overflow-hidden border-l border-[#a0a0a0] pl-[2px]">June, 2014</div>
            </div>
            <div className="flex h-[14px] leading-[14px]">
              <div className="flex w-[13px] shrink-0 justify-end overflow-hidden pr-[7px]">06</div>
              {WEEKS.map((w, i) => (
                <div key={i} className="w-[21px] shrink-0 border-l border-[#a0a0a0] pl-[2px]">{w}</div>
              ))}
              <div className="min-w-0 flex-1 overflow-hidden border-l border-[#a0a0a0] pl-[2px]">01</div>
            </div>
          </div>
          <div className="relative min-h-0 flex-1">
            <GanttChart />
          </div>
        </div>
        <div className="flex w-4 shrink-0 flex-col bg-[#f7f7f7]">
          <ScrollButton dir="up" className="h-[17px] w-4" />
          <ScrollButton className="h-[17px] w-4" />
          <div className="flex-1" />
          <ScrollButton dir="down" className="h-[17px] w-4" />
        </div>
      </div>
      <div className="mb-[5px] flex pr-4"><HScroll /></div>
    </div>
  );
}

/* ---------- window ---------- */

function TitleBar() {
  return (
    <header className="flex h-7 shrink-0 items-center">
      <div className="w-[130px] pl-4">
        <Svg w={76} h={22}>
          <path d="M0.500 0.500H66c12 2 12 19 0 20H10C10 12 6 4 0.500 0.500z" fill="#eef0f4" stroke="#9aa5b8" />
          <path d="M18 3h9v6h-9z" fill="#fff" stroke="#666" />
          <path d="M15 8h15v8H15z" fill="#8a8f97" stroke="#4a4f57" />
          <path d="M19 13h7v5h-7z" fill="#b5dcf8" stroke="#3f6ea8" />
          <path d="M36 9h5l-2.500 3z" fill="#777" />
          <path d="M47.500 3.500h10v13h-10z" fill="#fff" stroke="#7386a8" />
          <circle cx="54.500" cy="10.500" r="3.500" fill="#cfe6f7" stroke="#6a7f9c" />
          <path d="M57 13l4 4" stroke="#c8842c" strokeWidth="3" />
          <path d="M70 6.500h5M70 9h5l-2.500 3z" fill="#555" stroke="#555" />
        </Svg>
      </div>
      <h1 className="flex-1 pt-px text-center text-[11px]">RiskyProject Lite - [RP_BusinessPlan_Track2]</h1>
      <div className="mr-px flex w-[138px]">
        <button type="button" aria-label="Minimize" className="flex h-7 w-[46px] items-center justify-center"><Svg w={11} h={11}><path d="M0 5.500h11" stroke="#000" /></Svg></button>
        <button type="button" aria-label="Maximize" className="flex h-7 w-[46px] items-center justify-center"><Svg w={11} h={11}><path d="M0.500 0.500h9v9h-9z" stroke="#000" /></Svg></button>
        <button type="button" aria-label="Close window" className="flex h-7 w-[46px] items-center justify-center"><Svg w={11} h={11}><path d="M0.500 0.500l10 10M10.500 0.500l-10 10" stroke="#000" /></Svg></button>
      </div>
    </header>
  );
}

function TabBar() {
  const [tab, setTab] = useState('SCHEDULE');

  return (
    <nav className="mx-px flex h-[23px] shrink-0 items-stretch bg-[#31752f] text-[11px] text-white">
      <button type="button" className="flex w-14 items-center gap-[9px] pt-[2px] pl-[5px]">
        FILE
        <Svg w={6} h={4}><path d="M0 0h6L3 4z" fill="#b8d8b8" /></Svg>
      </button>
      {TABS.map((t) => (
        <button
          key={t.name}
          type="button"
          onClick={() => setTab(t.name)}
          className={`mt-px pt-px ${t.cls} ${t.name === tab ? 'bg-white text-black' : ''}`}
        >
          {t.name}
        </button>
      ))}
      <div className="ml-auto flex items-center pr-1 pb-[2px]">
        <button type="button" aria-label="Help" className="w-6 text-left text-[14px] leading-4 font-bold">?</button>
        <button type="button" aria-label="Remote" className="w-[22px]">
          <Svg w={12} h={12}><path d="M1 1h10v7H1zM6 8v3M2 11.500h8" stroke="#fff" strokeWidth="1.500" /></Svg>
        </button>
        <button type="button" aria-label="About" className="flex h-[14px] w-4 items-center justify-center border border-white font-bold">i</button>
      </div>
    </nav>
  );
}

export default function App() {
  return (
    <div className="flex h-screen flex-col overflow-hidden border-r border-b border-[#b8b8b8] bg-white font-['Open_Sans','Noto_Sans',sans-serif] text-black">
      <TitleBar />
      <TabBar />
      <Ribbon />
      <main className="flex min-h-0 flex-1 bg-[#f0f0f0] pl-px font-['Liberation_Sans',Arial,sans-serif] text-[11px]">
        <Workflow />
        <TaskTable />
        <GanttPanel />
      </main>
      <footer className="flex h-[21px] shrink-0 items-center bg-white pt-px pr-px pl-[5px] text-[11px] whitespace-pre">
        <span className="flex-1">Ready</span>
        <span className="w-[146px]">Result Gantt</span>
        <span className="flex w-[238px] justify-between">
          <span>CAP</span>
          <span>NUM</span>
          <span>SCRL</span>
          <span>Tue, May 03,2022</span>
          <span>8:54:34 PM</span>
        </span>
        <span className="flex w-[19px] justify-end self-end pb-[2px]">
          <Svg w={11} h={11}>
            <path d="M8 0h2v2H8zM4 4h2v2H4zM8 4h2v2H8zM0 8h2v2H0zM4 8h2v2H4zM8 8h2v2H8z" fill="#909090" />
          </Svg>
        </span>
      </footer>
    </div>
  );
}
